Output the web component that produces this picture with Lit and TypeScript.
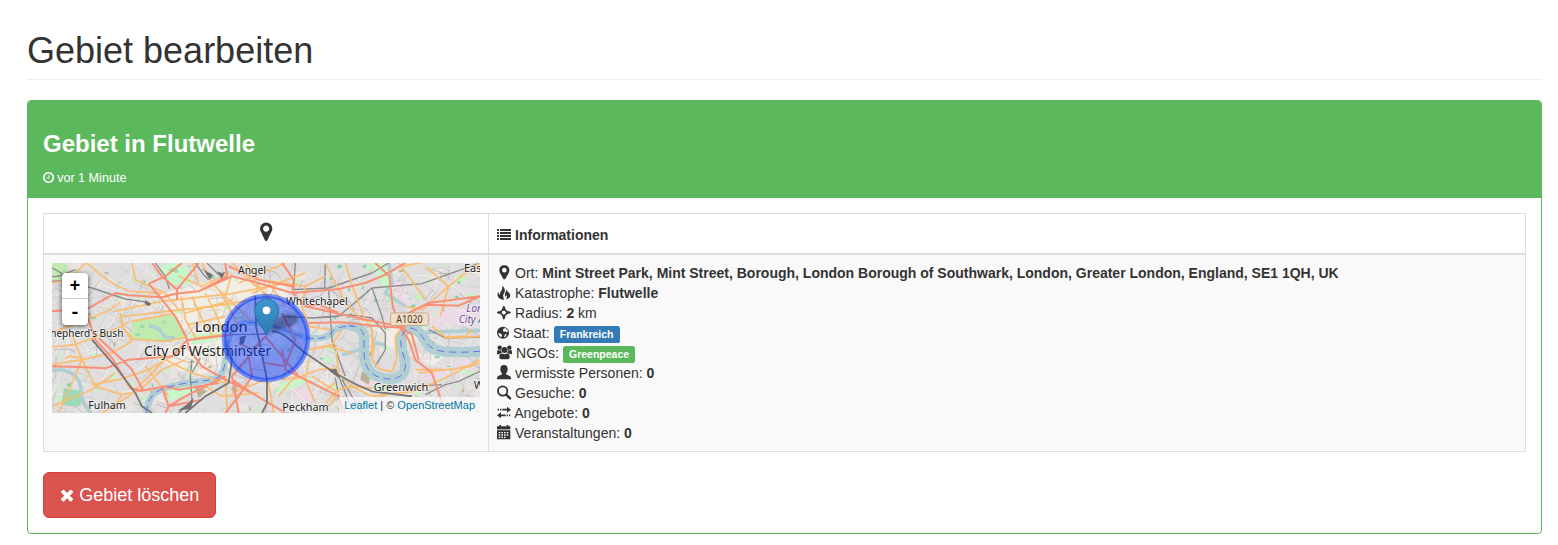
import { LitElement, html, css, svg } from "lit";
import { customElement, property } from "lit/decorators.js";

const MARKER =
  "M768 896q0 106 -75 181t-181 75t-181 -75t-75 -181t75 -181t181 -75t181 75t75 181zM1024 896q0 -109 -33 -179l-364 -774q-16 -33 -47.5 -52t-67.5 -19t-66.5 19t-46.5 52l-365 774q-33 70 -33 179q0 212 150 362t362 150t362 -150t150 -362z";
const CLOCK =
  "M896 992v-448q0 -14 -9 -23t-23 -9h-320q-14 0 -23 9t-9 23v64q0 14 9 23t23 9h224v352q0 14 9 23t23 9h64q14 0 23 -9t9 -23zM1312 640q0 148 -73 273t-198 198t-273 73t-273 -73t-198 -198t-73 -273t73 -273t198 -198t273 -73t273 73t198 198t73 273zM1536 640q0 -209 -103 -385.5t-279.5 -279.5t-385.5 -103t-385.5 103t-279.5 279.5t-103 385.5t103 385.5t279.5 279.5t385.5 103t385.5 -103t279.5 -279.5t103 -385.5z";
const TIMES =
  "M1298 214q0 -40 -28 -68l-136 -136q-28 -28 -68 -28t-68 28l-294 294l-294 -294q-28 -28 -68 -28t-68 28l-136 136q-28 28 -28 68t28 68l294 294l-294 294q-28 28 -28 68t28 68l136 136q28 28 68 28t68 -28l294 -294l294 294q28 28 68 28t68 -28l136 -136q28 -28 28 -68t-28 -68l-294 -294l294 -294q28 -28 28 -68z";

const flip = (d: string) => svg`<path transform="translate(0 1536) scale(1 -1)" d=${d} />`;

type Shape = { w: number; h: number; box: string; art: unknown };

const ICONS: Record<string, Shape> = {
  clock: { w: 11.14, h: 13, box: "0 0 1536 1792", art: flip(CLOCK) },
  times: { w: 14.14, h: 18, box: "0 0 1408 1792", art: flip(TIMES) },
  pin: { w: 12.3, h: 21.5, box: "0 0 1024 1792", art: flip(MARKER) },
  list: {
    w: 14, h: 14, box: "0 0 42 42",
    art: svg`<path d="M0 3h6v6H0zM9 3h33v6H9zM0 12h6v6H0zM9 12h33v6H9zM0 21h6v6H0zM9 21h33v6H9zM0 30h6v6H0zM9 30h33v6H9z" />`,
  },
  place: {
    w: 14, h: 14, box: "0 0 42 42",
    art: svg`<path fill-rule="evenodd" d="M22 -2c9 0 15 6 15 14.500c0 4 -1 7 -3 11L24.500 40h-5L10 23.500c-2 -4 -3 -7 -3 -11c0 -8.500 6 -14.500 15 -14.500zM22 5.500a7 7 0 1 0 0 14a7 7 0 1 0 0 -14z" />`,
  },
  fire: {
    w: 14, h: 14, box: "0 0 42 42",
    art: svg`<path d="M15 -1c8 5 10 12 8 19c-2 5 -6 8 -4 14c0 3 1 6 3 9c-11 0 -18 -4 -20 -11c-1 -5 0 -9 3 -13c0 5 1 8 4 10c-1 -6 1 -9 4 -13c3 -5 4 -10 2 -15z" /><path d="M27 5c0 6 3 9 7 13c6 6 7 11 4 16c-3 4 -6 6 -12 6c4 -5 5 -8 3 -14c-1 4 -2 5 -5 6c0 -5 -1 -8 1 -12c3 -5 3 -9 2 -15z" />`,
  },
  target: {
    w: 14, h: 14, box: "0 0 42 42",
    art: svg`<path d="M20.500 8L31.500 19.500L20.500 31L9 19.500z" fill="none" stroke="currentColor" stroke-width="5" /><path d="M20.500 -1l4 5v10h-8V4zM20.500 41l4 -5V26h-8v10zM-1 19.500l5 -4h10v8H4zM42 19.500l-5 -4H27v8h10z" /><path d="M18 18h5v4h-5z" fill="#f9f9f9" />`,
  },
  globe: {
    w: 12, h: 14, box: "0 0 36 42",
    art: svg`<circle cx="18" cy="20" r="18" /><path fill="#f9f9f9" d="M19 8l6 -2l6 5l2 7l-5 1l-3 -3l-4 2l-3 -3zM4 21l5 1l6 4l-1 7l-4 -1l-5 -6zM24 25l5 -1l-3 8l-5 2z" />`,
  },
  users: {
    w: 15, h: 14, box: "0 0 45 42",
    art: svg`<circle cx="8" cy="5" r="6.500" /><circle cx="37" cy="5" r="6.500" /><circle cx="22.500" cy="12" r="9" /><path d="M2 12c4 2 7 2 10 0c0 4 1 7 3 9c-4 0 -7 1 -8 4H4c-3 0 -4 -2 -4 -5c0 -3 0 -6 2 -8zM43 12c-4 2 -7 2 -10 0c0 4 -1 7 -3 9c4 0 7 1 8 4h3c3 0 4 -2 4 -5c0 -3 0 -6 -2 -8zM14 22c5 4 12 4 17 0c5 1 7 6 7 12c0 4 -2 6 -6 6H13c-4 0 -6 -2 -6 -6c0 -6 2 -11 7 -12z" />`,
  },
  user: {
    w: 14, h: 14, box: "0 0 42 42",
    art: svg`<path d="M21 -3c8 0 11 5 11 12c0 6 -2 10 -5 13c0 3 1 4 4 5c6 2 11 4 11 9v4H0v-4c0 -5 5 -7 11 -9c3 -1 4 -2 4 -5c-3 -3 -5 -7 -5 -13c0 -7 3 -12 11 -12z" />`,
  },
  search: {
    w: 14, h: 14, box: "0 0 42 42",
    art: svg`<circle cx="17" cy="15" r="14" fill="none" stroke="currentColor" stroke-width="5.500" /><path d="M28 26L39 37" stroke="currentColor" stroke-width="7.500" stroke-linecap="round" />`,
  },
  transfer: {
    w: 14, h: 14, box: "0 0 42 42",
    art: svg`<path d="M2 8.500h4v5H2zM9 8.500h4v5H9zM16 8.500h14V2l12 9L30 20v-6.500H16zM40 25.500h-4v5h4zM33 25.500h-4v5h4zM26 25.500H12V19L0 28L12 37v-6.500h14z" />`,
  },
  calendar: {
    w: 14, h: 14, box: "0 0 42 42",
    art: svg`<path fill-rule="evenodd" d="M7 -3h5v4h17v-4h5v4h6v8H0V1h7zM0 13h40v27H0zM5 18v4h5v-4zM13 18v4h5v-4zM21 18v4h5v-4zM29 18v4h5v-4zM5 25v4h5v-4zM13 25v4h5v-4zM21 25v4h5v-4zM29 25v4h5v-4zM5 32v4h5v-4zM13 32v4h5v-4zM21 32v4h5v-4z" /><path opacity=".4" d="M0 9h40v4H0z" />`,
  },
};

@customElement("ui-icon")
class UiIcon extends LitElement {
  @property() name = "list";
  static styles = css`
    :host { display: inline-block; line-height: 0; }
    svg { display: block; overflow: visible; fill: currentColor; }
  `;
  render() {
    const i = ICONS[this.name];
    return html`<svg width=${i.w} height=${i.h} viewBox=${i.box}>${i.art}</svg>`;
  }
}

/* Deterministic scatter for side streets and small parks. */
function scatter(seed: number) {
  let s = seed;
  return () => {
    s = (s * 16807) % 2147483647;
    return s / 2147483647;
  };
}

function sideStreets(seed: number, n: number) {
  const r = scatter(seed);
  let d = "";
  for (let i = 0; i < n; i++) {
    const a = (r() < 0.5 ? 0.35 : 1.9) + (r() - 0.5) * 0.9;
    const len = 18 + r() * 50;
    const dx = Math.cos(a) * len;
    const dy = Math.sin(a) * len;
    d += `M${(r() * 1284).toFixed(0)} ${(r() * 450).toFixed(0)}l${dx.toFixed(0)} ${dy.toFixed(0)}l${(dx * 0.4 - dy * 0.25).toFixed(0)} ${(dy * 0.4 + dx * 0.25).toFixed(0)}`;
  }
  return d;
}

function patches(seed: number, n: number, size: number) {
  const r = scatter(seed);
  let d = "";
  for (let i = 0; i < n; i++) {
    const w = size * (0.4 + r());
    const h = size * (0.3 + r() * 0.8);
    d += `M${(r() * 1284).toFixed(0)} ${(r() * 450).toFixed(0)}l${w.toFixed(0)} ${(-h * 0.3).toFixed(0)}l${(w * 0.2).toFixed(0)} ${h.toFixed(0)}l${(-w).toFixed(0)} ${(h * 0.3).toFixed(0)}z`;
  }
  return d;
}

const RIVER_WEST = "M282 450C290 400 305 386 340 375C400 355 440 360 490 347C520 338 520 290 526 250C532 205 545 180 590 178";
const RIVER_MID = "M590 178C650 176 690 200 735 216C765 226 800 234 830 217C850 195 870 187 905 190";
const RIVER_EAST =
  "M890 188C935 190 938 215 936 240C934 290 940 325 975 340C1010 355 1050 350 1058 320C1068 290 1040 260 1048 225C1058 190 1080 186 1105 212C1125 240 1130 262 1180 266C1220 269 1250 268 1290 264";

const YELLOW = [
  "M105 0C140 30 170 60 230 84L330 92", "M0 208C60 190 90 175 108 165M108 165C160 155 190 130 205 118",
  "M185 145L330 115L540 92L700 60", "M200 162L370 142L520 125L600 110", "M205 150L212 195L240 222L232 235",
  "M240 175L365 152L404 222L340 235L238 228L212 195", "M0 252L70 245L210 190L232 175",
  "M0 305L90 290L180 270L240 235", "M60 215L90 290L60 360L20 450", "M90 290L130 370L210 395L260 385L330 320L400 290",
  "M120 365L200 350L290 320L410 250", "M150 450L230 400L340 290", "M210 395L180 440", "M40 288L50 280L90 284",
  "M280 310L350 400M340 290L420 330L520 360", "M388 100L400 170L430 225L510 215", "M420 100L450 170L480 215",
  "M460 90L490 150L515 210", "M500 80L540 150L570 210M540 30L520 100L600 175", "M400 150L540 112M410 185L520 160",
  "M380 40L450 70L530 30M420 0L440 60M450 0L480 60L520 100", "M540 0L600 60L650 100L680 170", "M580 0L620 50L760 70L820 40",
  "M560 60L700 0M600 90L760 30", "M650 60L700 130M600 40L660 130", "M760 70L750 130L770 190L830 200",
  "M820 0L850 60L880 120L935 175", "M880 0L905 80L935 160L960 200L965 270",
  "M770 260L830 250L900 270", "M770 260L840 245L870 200", "M770 290L760 350L790 420", "M690 350L740 340L820 380L850 360",
  "M680 400L720 350L800 320L850 315", "M520 340L526 450M650 360L665 450M540 390L640 350", "M820 420L860 380L900 370L960 375",
  "M850 245L860 330L900 370L960 400L1080 385L1170 350L1284 290", "M960 200L960 290L985 320L1020 325L1035 290L1030 220L1050 195",
  "M1120 10L1190 70L1175 120L1165 160M1190 70L1240 30L1284 0", "M1190 70L1110 140L1060 130", "M1040 0L1070 40L1120 110",
  "M1090 320L1200 320L1284 300", "M1100 330L1200 318L1260 310", "M1140 190L1180 222L1240 220L1260 200", "M1180 225L1284 220",
  "M1050 10L1130 -5M0 430L120 380L190 330", "M0 60L50 50L100 0M240 0L250 50L340 90L380 140",
  "M780 340L860 390L830 430", "M460 370L510 400L620 390",
];
const RED = [
  "M0 145L110 135L155 110L190 90L230 97L330 103L370 92L440 85L540 40L620 60L720 90",
  "M0 310L80 312L160 316L230 290L360 280L404 232L540 215", "M300 0L330 40L375 80L375 110", "M290 62L340 40L390 0M290 62L330 110L370 160L404 225L412 260L450 310L520 350L600 390L700 450",
  "M108 165L130 230L180 285L235 375L270 385", "M140 225L210 290L240 320L275 385", "M270 383L340 370L380 380L500 360M330 370L350 430L400 400L520 340",
  "M375 80L440 0", "M520 0L525 40L440 85", "M530 10L620 50L720 70L725 90", "M690 0L725 50L722 90L760 130L850 150L930 168L1060 192",
  "M760 130L800 125L860 150", "M770 180L870 178L980 190L1060 195", "M720 90L860 78L940 60L1000 35L1060 0",
  "M970 0L1012 40L1022 130L1035 165", "M1040 165L1130 120L1284 100", "M1120 125L1220 128L1284 100",
  "M1040 190L1070 230L1090 290L1140 330L1160 390L1180 450", "M1050 195L1080 215L1100 290", "M640 220L590 280L540 340L560 450",
  "M590 280L600 340L560 400L520 450M640 220L740 340L860 400L880 450", "M640 220L600 260L560 240M690 260L700 320L740 340",
  "M690 150L730 230L700 310L640 300", "M540 350L600 390",
  "M350 430L340 450M350 430L450 410",
];
const RAIL = [
  "M0 15C40 30 60 70 120 75L220 108L290 118", "M0 40C20 45 40 30 70 20", "M0 55C30 50 60 60 110 72", "M310 0L340 40L352 78",
  "M430 0L455 35L470 50M465 0L500 35L520 28", "M120 230L190 310L250 390L270 430L300 450", "M420 290L415 340L420 410L380 450M445 285L420 330",
  "M400 450L460 400L530 360L540 290L530 250", "M610 100L612 190L625 250L645 350L645 420L630 450", "M540 215L640 213",
  "M660 205C700 205 730 250 760 270C820 310 870 350 960 385L1080 400", "M860 340L900 440M850 345L870 450M870 350L930 450",
  "M700 160L780 165L900 155", "M780 165L860 160L960 75L1110 62L1284 0", "M830 80L840 230L850 260L880 340", "M720 80L830 75L960 30L1010 0",
  "M730 0L725 80M820 0L818 75", "M890 155L960 165L1000 210L1000 260L970 310M1120 395L1180 365L1220 355L1284 325", "M1130 200L1180 225L1284 222",
  "M960 75L990 160L1000 200M1080 370L1170 365",
];

@customElement("city-map")
class CityMap extends LitElement {
  static styles = css`
    :host { display: block; position: relative; height: 150px; overflow: hidden; background: #ddd; }
    svg { display: block; }
    .lbl { font-family: "Noto Sans", sans-serif; fill: #222; stroke: #fff; stroke-opacity: .6; stroke-width: 5; paint-order: stroke; stroke-linejoin: round; }
    .air { fill: #6a4a9c; font-style: italic; }
    .zoom { position: absolute; left: 10px; top: 10px; width: 26px; border-radius: 4px; background: #fff; box-shadow: 0 1px 5px rgba(0,0,0,.65); }
    .zoom span { display: block; height: 26px; text-align: center; font: bold 18px/27px "Liberation Mono", monospace; color: #000; }
    .zoom span:first-child { border-bottom: 1px solid #ccc; box-sizing: border-box; }
    .zoom span:last-child { line-height: 29px; }
    .credit { position: absolute; right: 0; bottom: 0; padding: 0 5px; background: rgba(255,255,255,.7); font: 11px/16px "Liberation Sans", Arial, sans-serif; color: #333; white-space: nowrap; }
    .credit a { color: #0078a8; }
  `;
  render() {
    const lines = (ds: string[], color: string, w: number) =>
      svg`<path d=${ds.join("")} fill="none" stroke=${color} stroke-width=${w} stroke-linejoin="round" />`;
    return html`
      <svg width="428" height="150" viewBox="0 0 1284 450" preserveAspectRatio="none">
        <defs>
          <linearGradient id="pin" x1="0" y1="0" x2="0" y2="1"><stop offset="0" stop-color="#3c98d0" /><stop offset="1" stop-color="#2b7ab0" /></linearGradient>
          <filter id="soft" x="-30%" y="-30%" width="160%" height="160%"><feGaussianBlur stdDeviation="5" /></filter>
        </defs>
        <rect width="1284" height="450" fill="#e0dede" />
        <path fill="#f1eee6" d="M300 100L540 40L700 60L740 210L620 290L420 340L300 280L390 220L360 150zM950 170L1110 190L1130 230L1000 260zM1070 270L1180 280L1140 310z" />
        <path fill="#ecdbe6" d="M1010 40L1060 60L1070 130L1020 140zM900 350L1000 360L960 400zM1080 350L1240 290L1284 310L1130 350zM690 360L800 390L760 430zM1130 150L1284 130V190H1150z" />
        <path d=${patches(91, 75, 32)} fill="#eae4e0" />
        <path d=${patches(17, 100, 18)} fill="#c8f2c4" />
        <path d=${patches(51, 50, 10)} fill="#86d4ac" />
        <path d=${patches(29, 25, 12)} fill="#c3b995" />
        ${lines([sideStreets(7, 330)], "#c9c7c7", 2)}
        ${lines([sideStreets(123, 170)], "#f1eeec", 3)}
        ${lines([sideStreets(77, 90)], "#b0aeae", 2)}
        <path fill="#c0eaaf" d="M240 175L365 154L404 224L340 238L236 227zM0 0H45L50 48L0 52z" />
        <path fill="#c7f6c9" d="M325 15Q370 -20 410 20L420 60L390 70L340 55zM410 215L520 205L500 232L420 245zM340 365L420 355L430 390L345 415zM685 360L790 340L740 370L690 385zM960 0L1000 0L1020 70L1000 90z" />
        <path fill="#9bd8b4" d="M35 375L90 385L85 430L30 425zM315 230h45v6h-45zM350 20q20 -12 30 5l-8 6q-8 -8 -20 -4zM265 185h12v10h-12zM330 170l14 8l-8 8zM250 210h14v8h-14z" />
        <path fill="#b8b197" d="M930 325L955 340L950 365L925 350zM1125 220l25 20l-10 15l-18 -15zM425 365l40 20l-25 20z" />
        <path d=${RIVER_WEST + RIVER_MID} fill="none" stroke="#b0cfd2" stroke-width="19" />
        <path d=${RIVER_EAST} fill="none" stroke="#b0cfd2" stroke-width="31" />
        <path d="M-10 325C50 310 85 340 88 385S105 430 120 455M1120 208L1284 202M1010 0L1020 60L1000 90L1060 130M960 240L1000 245M870 275L940 255M290 190Q320 190 330 210T370 222" fill="none" stroke="#b0cfd2" stroke-width="11" />
        ${lines(RAIL, "#8d8b8b", 4)}
        ${lines(YELLOW, "#fbbd70", 5)}
        ${lines(RED, "#fa8f76", 6)}
        ${lines([RAIL[5], RAIL[8], RAIL[10], RAIL[7]], "#777", 5)}
        <path fill="#737171" d="M455 20l28 15l-10 15zM280 112l18 10l-8 8l-12 -8zM495 25l22 8l-8 15zM405 425l20 -20l-8 32l-40 6zM828 320l25 -3l10 30zM563 222l20 -5l-8 25l-12 5z" />
        <path d=${RIVER_WEST + RIVER_MID + RIVER_EAST} fill="none" stroke="#6970f0" stroke-width="3" stroke-dasharray="22 14" />
        <g class="lbl" font-size="33">
          <text x="558" y="34" textLength="84" lengthAdjust="spacingAndGlyphs">Angel</text>
          <text x="702" y="127" textLength="185" lengthAdjust="spacingAndGlyphs">Whitechapel</text>
          <text x="-22" y="221" textLength="236" lengthAdjust="spacingAndGlyphs">Shepherd's Bush</text>
          <text x="109" y="437" textLength="112" lengthAdjust="spacingAndGlyphs">Fulham</text>
          <text x="691" y="444" textLength="139" lengthAdjust="spacingAndGlyphs">Peckham</text>
          <text x="965" y="383" textLength="164" lengthAdjust="spacingAndGlyphs">Greenwich</text>
          <text x="1236" y="27">Eas</text>
          <text x="1265" y="378">W</text>
          <text class="air" x="1243" y="146" font-size="31">Lon</text>
          <text class="air" x="1220" y="181" font-size="31">City A</text>
        </g>
        <rect x="1016" y="150" width="113" height="37" rx="5" fill="#f2dfc8" stroke="#c9a987" stroke-width="3" />
        <text x="1033" y="181" font-size="31" font-family="Noto Sans, sans-serif" fill="#4a3524" textLength="79" lengthAdjust="spacingAndGlyphs">A1020</text>
        <g class="lbl">
          <text x="428" y="208" font-size="44" textLength="159" lengthAdjust="spacingAndGlyphs">London</text>
          <text x="276" y="279" font-size="42" textLength="382" lengthAdjust="spacingAndGlyphs">City of Westminster</text>
        </g>
        <circle cx="642" cy="225" r="126" fill="#0033ff" fill-opacity=".45" stroke="#0033ff" stroke-opacity=".5" stroke-width="14" />
        <path d="M646 214L668 175Q700 140 733 155Q748 175 716 190z" fill="#112" opacity=".35" filter="url(#soft)" />
        <path d="M643.500 218C637 198 608 172 608 143C608 123 624 108 643.500 108S680 123 680 143C680 172 650 198 643.500 218z" fill="url(#pin)" stroke="#2b6da3" stroke-width="3" />
        <circle cx="643.500" cy="142" r="13" fill="#fff" stroke="#2b6da3" stroke-width="2" />
      </svg>
      <div class="zoom"><span>+</span><span>-</span></div>
      <div class="credit"><a>Leaflet</a> | © <a>OpenStreetMap</a></div>
    `;
  }
}

@customElement("app-root")
class AppRoot extends LitElement {
  static styles = css`
    :host { display: block; box-sizing: border-box; height: 545px; overflow: hidden; padding: 31px 16px 0 27px; background: #fff; color: #333; font: 14px/20px "Liberation Sans", Arial, sans-serif; }
    * { box-sizing: border-box; }
    h1 { margin: 0 0 20px; height: 49px; border-bottom: 1px solid #eee; font-size: 36px; line-height: 40px; font-weight: 400; }
    .panel { border: 1px solid #5cb85c; border-radius: 4px; height: 434px; }
    .head { background: #5cb85c; color: #fff; height: 97px; padding: 30px 15px 10px; border-radius: 3px 3px 0 0; }
    h3 { margin: 0 0 10.6px; font-size: 24px; line-height: 26.4px; }
    .time { font-size: 12.6px; display: flex; align-items: center; gap: 3px; }
    .time ui-icon { margin-top: -1px; }
    .body { padding: 15px; }
    .grid { display: grid; grid-template-columns: 445px 1fr; grid-template-rows: 41px 196px; border: 1px solid #ddd; }
    .th { border-bottom: 2px solid #ddd; padding: 11px 8px 8px; font-weight: 700; }
    .th.c { display: flex; justify-content: center; padding-top: 7px; }
    .td { background: #f9f9f9; padding: 8px; }
    .l { border-right: 1px solid #ddd; }
    .row { height: 20px; white-space: nowrap; }
    .row ui-icon, .th ui-icon { vertical-align: -2px; margin-right: .15px; }
    .th.c ui-icon { height: 21px; }
    .label { padding: .2em .6em .3em; font-size: 75%; font-weight: 700; line-height: 1; color: #fff; vertical-align: baseline; border-radius: .25em; }
    .blue { background: #337ab7; }
    .green { background: #5cb85c; }
    .btn { display: flex; align-items: center; gap: 5px; margin-top: 20px; width: 173px; height: 46px; padding: 0 16px; border: 1px solid #d43f3a; border-radius: 6px; background: #d9534f; color: #fff; font: 18px/24px "Liberation Sans", Arial, sans-serif; white-space: nowrap; }
  `;
  render() {
    return html`
      <h1>Gebiet bearbeiten</h1>
      <section class="panel">
        <header class="head">
          <h3>Gebiet in Flutwelle</h3>
          <div class="time"><ui-icon name="clock"></ui-icon><span>vor 1 Minute</span></div>
        </header>
        <div class="body">
          <div class="grid">
            <div class="th c l"><ui-icon name="pin"></ui-icon></div>
            <div class="th"><ui-icon name="list"></ui-icon> Informationen</div>
            <div class="td l"><city-map></city-map></div>
            <div class="td">
              <div class="row"><ui-icon name="place"></ui-icon> Ort: <b>Mint Street Park, Mint Street, Borough, London Borough of Southwark, London, Greater London, England, SE1 1QH, UK</b></div>
              <div class="row"><ui-icon name="fire"></ui-icon> Katastrophe: <b>Flutwelle</b></div>
              <div class="row"><ui-icon name="target"></ui-icon> Radius: <b>2</b> km</div>
              <div class="row"><ui-icon name="globe"></ui-icon> Staat: <span class="label blue">Frankreich</span></div>
              <div class="row"><ui-icon name="users"></ui-icon> NGOs: <span class="label green">Greenpeace</span></div>
              <div class="row"><ui-icon name="user"></ui-icon> vermisste Personen: <b>0</b></div>
              <div class="row"><ui-icon name="search"></ui-icon> Gesuche: <b>0</b></div>
              <div class="row"><ui-icon name="transfer"></ui-icon> Angebote: <b>0</b></div>
              <div class="row"><ui-icon name="calendar"></ui-icon> Veranstaltungen: <b>0</b></div>
            </div>
          </div>
          <button class="btn"><ui-icon name="times"></ui-icon><span>Gebiet löschen</span></button>
        </div>
      </section>
    `;
  }
}
